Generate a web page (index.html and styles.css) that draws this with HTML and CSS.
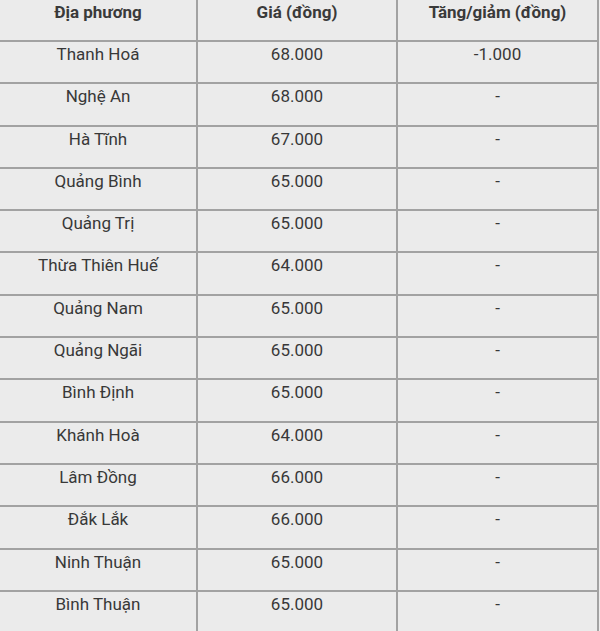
FILE: index.html
```html
<!DOCTYPE html>
<html lang="vi">
<head>
<meta charset="utf-8">
<link rel="stylesheet" href="styles.css">
</head>
<body>
<table class="price-table">
  <colgroup>
    <col class="col-a"><col class="col-b"><col class="col-c">
  </colgroup>
  <thead>
    <tr><th>Địa phương</th><th>Giá (đồng)</th><th>Tăng/giảm (đồng)</th></tr>
  </thead>
  <tbody>
    <tr><td>Thanh Hoá</td><td>68.000</td><td>-1.000</td></tr>
    <tr><td>Nghệ An</td><td>68.000</td><td>-</td></tr>
    <tr><td>Hà Tĩnh</td><td>67.000</td><td>-</td></tr>
    <tr><td>Quảng Bình</td><td>65.000</td><td>-</td></tr>
    <tr><td>Quảng Trị</td><td>65.000</td><td>-</td></tr>
    <tr><td>Thừa Thiên Huế</td><td>64.000</td><td>-</td></tr>
    <tr><td>Quảng Nam</td><td>65.000</td><td>-</td></tr>
    <tr><td>Quảng Ngãi</td><td>65.000</td><td>-</td></tr>
    <tr><td>Bình Định</td><td>65.000</td><td>-</td></tr>
    <tr><td>Khánh Hoà</td><td>64.000</td><td>-</td></tr>
    <tr><td>Lâm Đồng</td><td>66.000</td><td>-</td></tr>
    <tr><td>Đắk Lắk</td><td>66.000</td><td>-</td></tr>
    <tr><td>Ninh Thuận</td><td>65.000</td><td>-</td></tr>
    <tr><td>Bình Thuận</td><td>65.000</td><td>-</td></tr>
  </tbody>
</table>
</body>
</html>
```

FILE: styles.css
```css
html, body {
  margin: 0;
  padding: 0;
  background: #ececec;
}
body {
  font-family: Roboto, "Liberation Sans", Arial, sans-serif;
  color: #383838;
  overflow: hidden;
}
.price-table {
  border-collapse: collapse;
  table-layout: fixed;
  width: 598px;
  background: #ebebeb;
}
.col-a { width: 197px; }
.col-b { width: 200px; }
.col-c { width: 201px; }
.price-table th,
.price-table td {
  text-align: center;
  font-size: 17px;
  line-height: 24px;
  padding: 0 4px;
  vertical-align: top;
  border: 2px solid #a2a2a2;
  box-sizing: border-box;
}
.price-table th:first-child,
.price-table td:first-child {
  border-left: none;
}
.price-table th {
  font-weight: 700;
  color: #3a3a3a;
  height: 41px;
  padding-top: 0;
  border-top: none;
}
.price-table td {
  height: 42.3px;
  padding-top: 0;
}
```
